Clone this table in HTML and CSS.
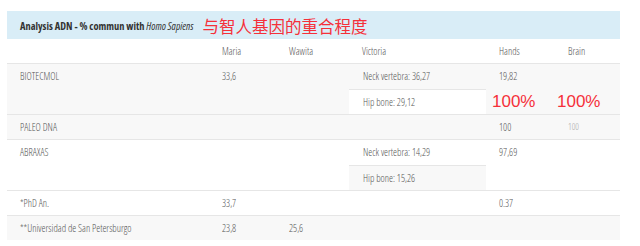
FILE: index.html
```html
<!DOCTYPE html>
<html>
<head>
<meta charset="utf-8">
<link rel="stylesheet" href="styles.css">
</head>
<body>
<div class="wrap">
  <div class="caption">
    <span class="title">Analysis ADN - % commun with <em>Homo Sapiens</em></span>
    <span class="note">与智人基因的重合程度</span>
  </div>
  <table class="grid">
    <colgroup>
      <col class="c1"><col class="c2"><col class="c3"><col class="c4"><col class="c5"><col class="c6">
    </colgroup>
    <thead>
      <tr><th></th><th>Maria</th><th>Wawita</th><th>Victoria</th><th>Hands</th><th>Brain</th></tr>
    </thead>
    <tbody>
      <tr class="grey tall">
        <td>BIOTECMOL</td><td>33,6</td><td></td>
        <td class="nest"><div class="sub">Neck vertebra: 36,27</div><div class="sub light">Hip bone: 29,12</div></td>
        <td class="stack"><div class="sub">19,82</div><div class="big">100%</div></td>
        <td class="stack"><div class="sub"></div><div class="big">100%</div></td>
      </tr>
      <tr class="grey">
        <td>PALEO DNA</td><td></td><td></td><td></td><td>100</td><td class="faint">100</td>
      </tr>
      <tr class="tall">
        <td>ABRAXAS</td><td></td><td></td>
        <td class="nest"><div class="sub">Neck vertebra: 14,29</div><div class="sub dark">Hip bone: 15,26</div></td>
        <td>97,69</td><td></td>
      </tr>
      <tr>
        <td>*PhD An.</td><td>33,7</td><td></td><td></td><td>0.37</td><td></td>
      </tr>
      <tr class="grey">
        <td>**Universidad de San Petersburgo</td><td>23,8</td><td>25,6</td><td></td><td></td><td></td>
      </tr>
    </tbody>
  </table>
</div>
</body>
</html>
```

FILE: styles.css
```css
* { box-sizing: border-box; }
body {
  margin: 0;
  background: #fff;
  font-family: "Open Sans", "Liberation Sans", sans-serif;
  color: #555;
}
.wrap {
  padding: 11px 0 0 7px;
  width: 620px;
}
.caption {
  height: 28px;
  background: #d9edf7;
  display: flex;
  align-items: center;
  padding-left: 13px;
  gap: 9px;
}
.title {
  font-size: 10.4px;
  font-weight: 700;
  color: #333;
  font-stretch: 87.5%;
  padding-top: 1px;
}
.title em {
  font-weight: 400;
  font-style: italic;
}
.note {
  font-family: "Noto Sans CJK SC", sans-serif;
  font-size: 16.5px;
  color: #f5303a;
  line-height: 1;
  padding-top: 3px;
}
.grid {
  width: 613px;
  border-collapse: collapse;
  table-layout: fixed;
  font-size: 10px;
  font-stretch: 75%;
  font-weight: 300;
}
.c1 { width: 202px; }
.c2 { width: 67px; }
.c3 { width: 73px; }
.c4 { width: 137px; }
.c5 { width: 69px; }
.c6 { width: 65px; }
.grid th, .grid td {
  text-align: left;
  font-weight: 300;
  padding: 0 0 0 13px;
  height: 24px;
  line-height: 24px;
  vertical-align: top;
  border-top: 1px solid #e6e6e6;
  white-space: nowrap;
}
.grid th { border-top: none; border-bottom: 1px solid #e6e6e6; }
.grid tr.grey td { background: #f8f8f8; }
.grid tr.tall td { height: 50px; }
.grid td.nest, .grid td.stack { padding: 0; }
.sub { height: 25px; line-height: 24px; padding-left: 14px; }
.stack .sub { padding-left: 13px; }
.nest .sub + .sub { border-top: 1px solid #e6e6e6; }
.sub.light { background: #fff; }
.sub.dark { background: #f8f8f8; }
.big {
  font-family: "Liberation Sans", sans-serif;
  font-stretch: normal;
  font-size: 17px;
  font-weight: 400;
  color: #f5303a;
  line-height: 25px;
  padding-left: 6px;
}
.stack + .stack .big { padding-left: 2px; }
.faint { color: #aaa; font-size: 9px; }
```
